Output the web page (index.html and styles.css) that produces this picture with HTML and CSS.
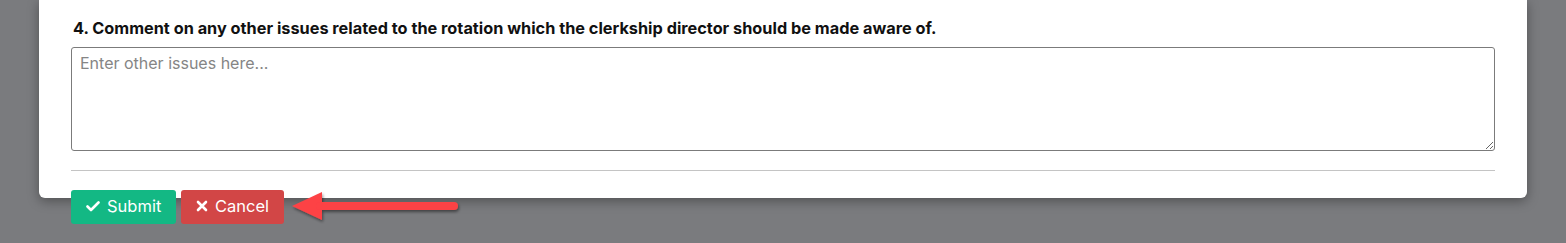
FILE: index.html
```html
<!DOCTYPE html>
<html lang="en">
<head>
    <meta charset="UTF-8">
    <meta name="viewport" content="width=device-width, initial-scale=1.0">
    <title>Clerkship Evaluation</title>
    <link rel="stylesheet" href="styles.css">
</head>
<body>

    <div class="card">
        <!-- Pregunta 4 -->
        <label class="question" for="otherIssues">4. Comment on any other issues related to the rotation which the clerkship director should be made aware of.</label>
        <textarea id="otherIssues" class="answer" placeholder="Enter other issues here..."></textarea>
        <hr class="divider">
    </div>

    <div class="actions">
        <button class="submit">
            <svg width="14" height="14" viewBox="0 0 14 14"><polyline points="1.5,7.5 5,11 12.5,3.5" fill="none" stroke="white" stroke-width="2.6" stroke-linecap="round" stroke-linejoin="round"/></svg>
            Submit
        </button>
        <button class="cancel">
            <svg width="12" height="12" viewBox="0 0 12 12"><path d="M2 2 L10 10 M10 2 L2 10" stroke="white" stroke-width="2.6" stroke-linecap="round"/></svg>
            Cancel
        </button>
        <svg class="arrow" width="176" height="40" viewBox="0 0 176 40">
            <defs>
                <filter id="sombra" x="-10%" y="-30%" width="130%" height="170%">
                    <feDropShadow dx="1" dy="2" stdDeviation="1.6" flood-color="#000" flood-opacity="0.45"/>
                </filter>
            </defs>
            <g filter="url(#sombra)">
                <polygon points="2,17 32,3 32,31" fill="#fd4245"/>
                <line x1="30" y1="17" x2="164" y2="17" stroke="#fd4245" stroke-width="8" stroke-linecap="round"/>
            </g>
        </svg>
    </div>

</body>
</html>
```

FILE: styles.css
```css
body { margin: 0; background: #7a7b7e; font-family: Inter, "Liberation Sans", Arial, sans-serif; overflow: hidden; }
.card { margin-left: 39px; width: 1488px; box-sizing: border-box; background: #ffffff; padding: 18px 32px 27px; border-radius: 0 0 6px 6px; box-shadow: 0 3px 12px rgba(0, 0, 0, 0.35); }
.question { display: block; font-size: 16.3px; font-weight: bold; color: #111; padding-left: 2px; line-height: 20px; margin-bottom: 9px; }
.answer { display: block; width: 100%; height: 104px; box-sizing: border-box; border: 1px solid #7b7b7b; border-radius: 3px; padding: 4px 8px 5px; font-family: inherit; font-size: 16px; line-height: 22px; color: #333; margin: 0; resize: vertical; }
.answer::placeholder { color: #858585; }
.divider { border: none; border-top: 1px solid #c4c4c4; margin: 19px 0 0; }
.actions { position: relative; display: flex; gap: 5px; margin: -8px 0 0 71px; }
button { display: flex; align-items: center; gap: 7px; height: 34px; border: none; border-radius: 3px; color: white; font-family: inherit; font-size: 16.5px; cursor: pointer; }
.submit { background: #13b884; width: 105px; padding: 0 0 2px 15px; }
.cancel { background: #d24646; width: 103px; padding: 0 0 2px 15px; }
.arrow { position: absolute; left: 219px; top: -1px; }
```
